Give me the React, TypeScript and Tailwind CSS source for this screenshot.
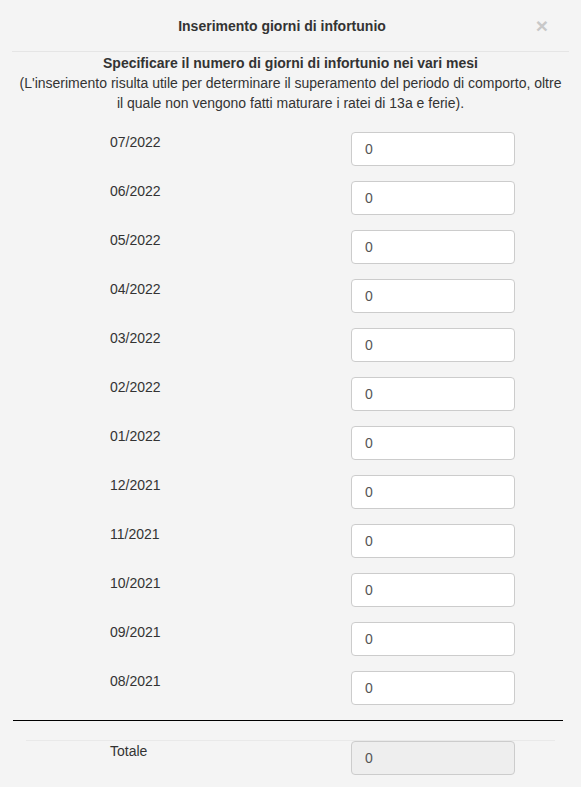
const MONTHS = [
  '07/2022',
  '06/2022',
  '05/2022',
  '04/2022',
  '03/2022',
  '02/2022',
  '01/2022',
  '12/2021',
  '11/2021',
  '10/2021',
  '09/2021',
  '08/2021',
];

function Row({ label, value, disabled }: { label: string; value: string; disabled?: boolean }) {
  return (
    <div className="flex items-start pl-[110px]">
      <div className="w-[241px] leading-5">{label}</div>
      <input
        type="text"
        readOnly
        value={value}
        disabled={disabled}
        className={
          'h-[34px] w-[164px] rounded-[4px] border border-[#ccc] px-[13px] text-[14px] text-[#555] outline-none ' +
          (disabled ? 'bg-[#eee]' : 'bg-white')
        }
      />
    </div>
  );
}

export default function App() {
  return (
    <div className="h-[787px] w-[581px] overflow-hidden bg-[#f4f4f4] font-['Liberation_Sans',Arial,sans-serif] text-[14px] text-[#333]">
      {/* header */}
      <div className="relative mx-[12px] flex h-[52px] items-center justify-center border-b border-[#e5e5e5] pr-[17px]">
        <h4 className="text-[14px] font-bold leading-5">Inserimento giorni di infortunio</h4>
        <button
          type="button"
          className="absolute right-[21px] top-[15px] text-[21px] font-bold leading-none text-[#c8c8c8]"
        >
          ×
        </button>
      </div>

      {/* body */}
      <div className="px-[12px] pt-px text-center leading-5">
        <p className="font-bold">Specificare il numero di giorni di infortunio nei vari mesi</p>
        <p>
          (L'inserimento risulta utile per determinare il superamento del periodo di comporto, oltre
          <br />
          il quale non vengono fatti maturare i ratei di 13a e ferie).
        </p>
      </div>

      <div className="mt-[19px] flex flex-col gap-[15px]">
        {MONTHS.map((m) => (
          <Row key={m} label={m} value="0" />
        ))}
      </div>

      <div className="mx-[13px] mt-[15px] h-px w-[550px] bg-black" />
      <div className="mx-[26px] mt-[19px] h-px bg-[#e9e9e9]" />
      <Row label="Totale" value="0" disabled />
    </div>
  );
}
